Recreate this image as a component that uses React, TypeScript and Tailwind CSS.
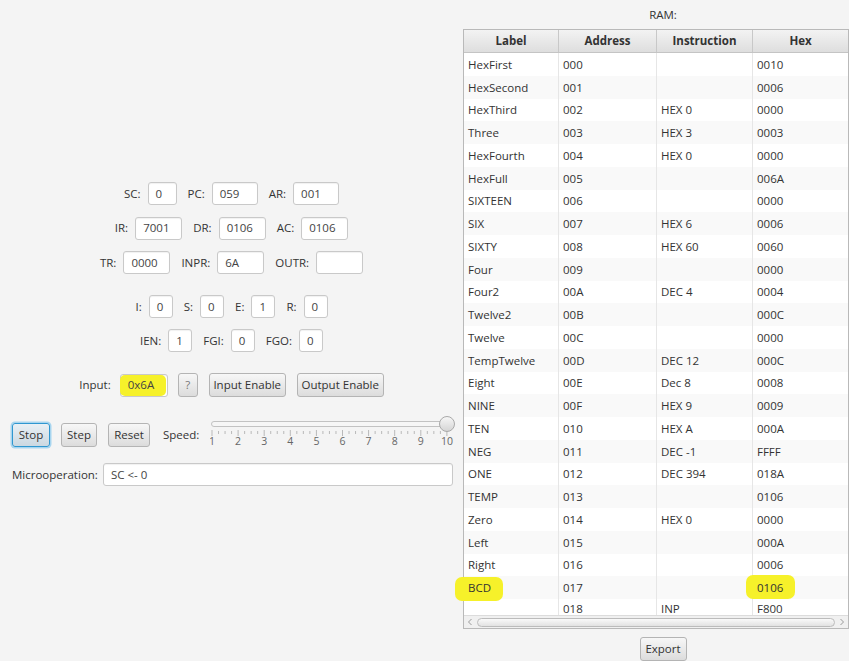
import { ReactNode } from "react";

type Row = [string, string, string, string];

const ram: Row[] = [
  ["HexFirst", "000", "", "0010"],
  ["HexSecond", "001", "", "0006"],
  ["HexThird", "002", "HEX 0", "0000"],
  ["Three", "003", "HEX 3", "0003"],
  ["HexFourth", "004", "HEX 0", "0000"],
  ["HexFull", "005", "", "006A"],
  ["SIXTEEN", "006", "", "0000"],
  ["SIX", "007", "HEX 6", "0006"],
  ["SIXTY", "008", "HEX 60", "0060"],
  ["Four", "009", "", "0000"],
  ["Four2", "00A", "DEC 4", "0004"],
  ["Twelve2", "00B", "", "000C"],
  ["Twelve", "00C", "", "0000"],
  ["TempTwelve", "00D", "DEC 12", "000C"],
  ["Eight", "00E", "Dec 8", "0008"],
  ["NINE", "00F", "HEX 9", "0009"],
  ["TEN", "010", "HEX A", "000A"],
  ["NEG", "011", "DEC -1", "FFFF"],
  ["ONE", "012", "DEC 394", "018A"],
  ["TEMP", "013", "", "0106"],
  ["Zero", "014", "HEX 0", "0000"],
  ["Left", "015", "", "000A"],
  ["Right", "016", "", "0006"],
  ["BCD", "017", "", "0106"],
];

function Field({ className, children }: { className: string; children?: ReactNode }) {
  return (
    <div
      className={`relative h-[23px] flex items-center px-[7px] bg-white border border-[#c9c9c9] rounded-[3px] shadow-[inset_0_1px_1px_rgba(0,0,0,0.06)] text-[#444] ${className}`}
    >
      {children}
    </div>
  );
}

function Reg({ label, value, w }: { label: string; value: string; w: string }) {
  return (
    <div className="flex items-center gap-[7px]">
      <span>{label}</span>
      <Field className={w}>{value}</Field>
    </div>
  );
}

function Btn({ className, children }: { className: string; children: ReactNode }) {
  return (
    <div
      className={`h-[24px] flex items-center justify-center rounded-[3px] border text-[#333] ${className}`}
    >
      {children}
    </div>
  );
}

const plain = "border-[#b4b4b4] bg-linear-to-b from-[#f7f7f7] to-[#dcdcdc]";

function Slider() {
  const x0 = 2;
  const step = 26.1;
  const ticks = [];
  for (let i = 0; i <= 36; i++) {
    const x = x0 + (step / 4) * i;
    const major = i % 4 === 0;
    ticks.push(
      <line key={i} x1={x} x2={x} y1={major ? 16 : 17} y2={major ? 22 : 20} stroke="#b9b9b9" strokeWidth="1" />
    );
  }
  return (
    <svg width="245" height="42" viewBox="0 0 245 42">
      <defs>
        <linearGradient id="thumb" x1="0" y1="0" x2="0" y2="1">
          <stop offset="0" stopColor="#f7f7f7" />
          <stop offset="1" stopColor="#d4d4d4" />
        </linearGradient>
      </defs>
      <rect x="1.5" y="7.5" width="238" height="5" rx="2.5" fill="#f6f6f6" stroke="#c2c2c2" />
      {ticks}
      {Array.from({ length: 10 }, (_, i) => (
        <text
          key={i}
          x={x0 + step * i}
          y="31"
          textAnchor="middle"
          fontSize="10.5"
          fill="#666"
          fontFamily="Open Sans, sans-serif"
        >
          {i + 1}
        </text>
      ))}
      <circle cx="237" cy="10" r="7.5" fill="url(#thumb)" stroke="#a9a9a9" />
    </svg>
  );
}

export default function App() {
  return (
    <div className="w-[849px] h-[661px] overflow-hidden flex bg-[#f4f4f4] font-['Open_Sans',sans-serif] text-[11.5px] text-[#333]">
      {/* left: registers and controls */}
      <div className="w-[463px] shrink-0 flex flex-col pt-[182px]">
        <div className="flex flex-col items-center gap-[11.5px]">
          <div className="flex items-center gap-[11px]">
            <Reg label="SC:" value="0" w="w-[29px]" />
            <Reg label="PC:" value="059" w="w-[46px]" />
            <Reg label="AR:" value="001" w="w-[46px]" />
          </div>
          <div className="flex items-center gap-[11px]">
            <Reg label="IR:" value="7001" w="w-[47px]" />
            <Reg label="DR:" value="0106" w="w-[47px]" />
            <Reg label="AC:" value="0106" w="w-[47px]" />
          </div>
          <div className="flex items-center gap-[11px]">
            <Reg label="TR:" value="0000" w="w-[47px]" />
            <Reg label="INPR:" value="6A" w="w-[47px]" />
            <Reg label="OUTR:" value="" w="w-[47px]" />
          </div>
        </div>

        <div className="mt-[21px] flex flex-col items-center gap-[11px]">
          <div className="flex items-center gap-[11px]">
            <Reg label="I:" value="0" w="w-[24px]" />
            <Reg label="S:" value="0" w="w-[24px]" />
            <Reg label="E:" value="1" w="w-[24px]" />
            <Reg label="R:" value="0" w="w-[24px]" />
          </div>
          <div className="flex items-center gap-[11px]">
            <Reg label="IEN:" value="1" w="w-[24px]" />
            <Reg label="FGI:" value="0" w="w-[24px]" />
            <Reg label="FGO:" value="0" w="w-[24px]" />
          </div>
        </div>

        <div className="mt-[21px] flex items-center justify-center">
          <span>Input:</span>
          <Field className="w-[48px] ml-[9px]">
            <span className="relative z-10">0x6A</span>
            <span className="absolute left-[-1px] top-[0px] w-[46px] h-[21px] rounded-[5px] bg-[#f6f12a]" />
          </Field>
          <Btn className={`w-[20px] ml-[10px] ${plain}`}>
            <span className="text-[#777]">?</span>
          </Btn>
          <Btn className={`w-[77px] ml-[11px] ${plain}`}>Input Enable</Btn>
          <Btn className={`w-[87px] ml-[11px] ${plain}`}>Output Enable</Btn>
        </div>

        <div className="mt-[17px] pl-[12px] h-[42px] flex items-center">
          <Btn className="w-[38px] border-[#2f97d0] bg-linear-to-b from-[#e9f0f5] to-[#cbd8e1] shadow-[0_0_0_1.5px_#a7d5ef]">
            Stop
          </Btn>
          <Btn className={`w-[36px] ml-[11px] ${plain}`}>Step</Btn>
          <Btn className={`w-[42px] ml-[11px] ${plain}`}>Reset</Btn>
          <span className="ml-[13px] w-[34px]">Speed:</span>
          <div className="ml-[13px] self-start">
            <Slider />
          </div>
        </div>

        <div className="mt-[7px] pl-[12px] pr-[10px] flex items-center">
          <span className="w-[91px] shrink-0 whitespace-nowrap">Microoperation:</span>
          <Field className="flex-1">SC &lt;- 0</Field>
        </div>
      </div>

      {/* right: RAM table */}
      <div className="w-[386px] shrink-0 flex flex-col">
        <div className="h-[30px] flex items-center justify-center pl-[14px]">RAM:</div>
        <div className="h-[600px] flex flex-col border border-[#b9b9b9] bg-white">
          <div className="h-[23px] shrink-0 flex bg-linear-to-b from-[#f3f3f3] to-[#dedede] border-b border-[#c4c4c4] font-bold text-[#333]">
            <div className="w-[95px] flex items-center justify-center border-r border-[#c8c8c8]">Label</div>
            <div className="w-[98px] flex items-center justify-center border-r border-[#c8c8c8]">Address</div>
            <div className="w-[96px] flex items-center justify-center border-r border-[#c8c8c8]">Instruction</div>
            <div className="flex-1 flex items-center justify-center">Hex</div>
          </div>
          <div className="h-[562px] shrink-0 flex flex-col">
            {ram.map((r, i) => (
              <div
                key={r[1]}
                className={`h-[22.75px] shrink-0 flex ${i % 2 === 1 ? "bg-[#f9f9f9]" : "bg-white"}`}
              >
                <div className="relative w-[95px] px-[4px] flex items-center border-r border-[#e6e6e6]">
                  <span className="relative z-10">{r[0]}</span>
                  {r[0] === "BCD" && (
                    <span className="absolute left-[-9px] top-[1px] w-[48px] h-[24px] rounded-[7px] bg-[#f6f12a]" />
                  )}
                </div>
                <div className="w-[98px] px-[4px] flex items-center border-r border-[#e6e6e6]">{r[1]}</div>
                <div className="w-[96px] px-[4px] flex items-center border-r border-[#e6e6e6]">{r[2]}</div>
                <div className="relative flex-1 px-[4px] flex items-center">
                  <span className="relative z-10">{r[3]}</span>
                  {r[0] === "BCD" && (
                    <span className="absolute left-[-7px] top-[-1px] w-[49px] h-[24px] rounded-[7px] bg-[#f6f12a]" />
                  )}
                </div>
              </div>
            ))}
            <div className="h-[16px] shrink-0 flex overflow-hidden bg-white leading-[13px]">
              <div className="w-[95px] px-[4px] pt-[3px] border-r border-[#e6e6e6]"></div>
              <div className="w-[98px] px-[4px] pt-[3px] border-r border-[#e6e6e6]">018</div>
              <div className="w-[96px] px-[4px] pt-[3px] border-r border-[#e6e6e6]">INP</div>
              <div className="flex-1 px-[4px] pt-[3px]">F800</div>
            </div>
          </div>
          <div className="h-[13px] shrink-0 flex items-center bg-[#f0f0f0] border-t border-[#dcdcdc] px-[2px]">
            <svg width="6" height="8" viewBox="0 0 6 8" className="ml-[1px]">
              <path d="M4.5 1 L1.5 4 L4.5 7" fill="none" stroke="#9a9a9a" strokeWidth="1" />
            </svg>
            <div className="flex-1 mx-[4px] h-[9px] rounded-full border border-[#bcbcbc] bg-linear-to-b from-[#fafafa] to-[#e2e2e2]" />
            <svg width="6" height="8" viewBox="0 0 6 8" className="mr-[1px]">
              <path d="M1.5 1 L4.5 4 L1.5 7" fill="none" stroke="#9a9a9a" strokeWidth="1" />
            </svg>
          </div>
        </div>
        <div className="mt-[8px] flex justify-center pl-[14px]">
          <Btn className={`w-[47px] ${plain}`}>Export</Btn>
        </div>
      </div>
    </div>
  );
}
